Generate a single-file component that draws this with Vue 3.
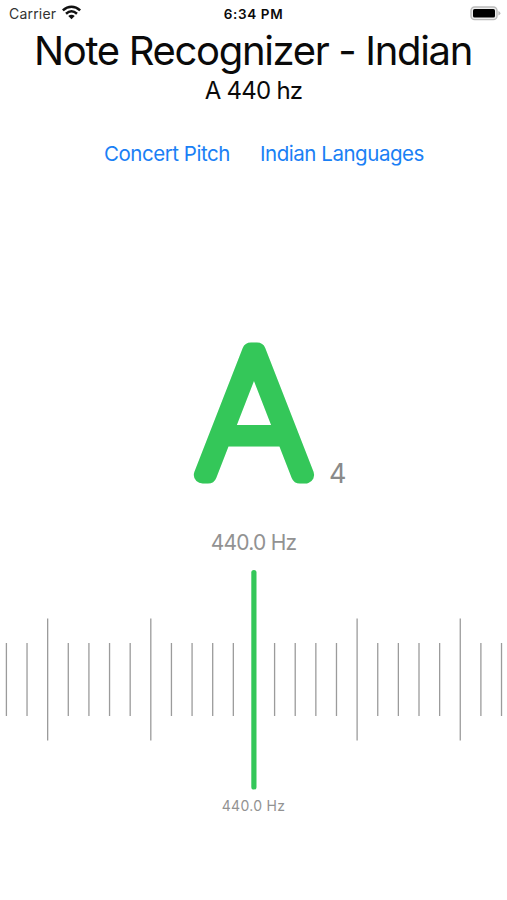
<template>
    <div class="screen">
        <header class="status-bar">
            <div class="carrier">
                <span>Carrier</span>
                <svg class="wifi" viewBox="0 0 18 14">
                    <path d="M.8 5 C5.8 .3 12.2 .3 17.2 5" />
                    <path d="M3.8 8.2 C7 5.3 11 5.3 14.2 8.2" />
                    <path class="dot" d="M5.9 10.3 Q9 7.9 12.1 10.3 L9 13.4 Z" />
                </svg>
            </div>
            <span class="clock">6:34 PM</span>
            <svg class="battery" viewBox="0 0 31 15">
                <rect class="shell" x="1" y="1" width="26" height="12.6" rx="3.6" />
                <rect class="charge" x="3" y="3" width="22" height="8.6" rx="1.6" />
                <path class="cap" d="M28.4 5 Q30.4 5.8 30.4 7.3 Q30.4 8.8 28.4 9.6 Z" />
            </svg>
        </header>

        <h1 class="title">Note Recognizer - Indian</h1>
        <p class="pitch">A 440 hz</p>

        <nav class="links">
            <a v-for="link in links" :key="link" class="link">{{ link }}</a>
        </nav>

        <main class="tuner">
            <div class="note">
                <svg class="note-name" viewBox="0 0 140 210">
                    <text transform="translate(70 164.3) scale(1.045 1)">{{ note }}</text>
                </svg>
                <span class="octave">{{ octave }}</span>
            </div>
            <p class="frequency">{{ frequency }}</p>
            <svg class="scale" viewBox="0 0 507 220">
                <line v-for="tick in ticks" :key="tick.x" class="tick"
                    :x1="tick.x" :x2="tick.x" :y1="tick.top" :y2="tick.bottom" />
                <rect class="needle" x="251.3" y="0" width="5.2" height="219.5" rx="2.6" />
            </svg>
            <p class="target">{{ frequency }}</p>
        </main>
    </div>
</template>

<script setup>
import { ref, computed } from 'vue';

const links = ['Concert Pitch', 'Indian Languages'];
const note = ref('A');
const octave = ref(4);
const hertz = ref(440);
const frequency = computed(() => `${hertz.value.toFixed(1)} Hz`);

// 25 marks, the middle one is covered by the needle
const ticks = computed(() => {
    const list = [];
    for (let i = 0; i < 25; i++) {
        if (i === 12) continue;
        const major = i % 5 === 2;
        list.push({
            x: 6.4 + i * 20.63,
            top: major ? 48.5 : 73,
            bottom: major ? 170.5 : 146
        });
    }
    return list;
});
</script>

<style>
body {
    background: #fff;
}
</style>

<style scoped>
.screen {
    width: 507px;
    height: 900px;
    overflow: hidden;
    background: #fff;
    color: #0a0a0a;
    font-family: Inter, "Liberation Sans", sans-serif;
}

.status-bar {
    display: grid;
    grid-template-columns: 1fr auto 1fr;
    align-items: center;
    height: 27px;
    padding: 0 6px 0 9px;
    box-sizing: border-box;
    font-size: 14px;
}

.carrier {
    display: flex;
    align-items: center;
    gap: 6px;
    color: #333;
    letter-spacing: .2px;
}

.wifi {
    width: 19px;
    height: 15px;
    margin-top: -2px;
    fill: none;
    stroke: #111;
    stroke-width: 2.4;
}

.wifi .dot {
    fill: #111;
    stroke: none;
}

.clock {
    margin-right: 3px;
    font-size: 13.5px;
    font-weight: 600;
    letter-spacing: .65px;
}

.battery {
    justify-self: end;
    width: 31px;
    height: 15px;
}

.shell {
    fill: #eee;
    stroke: #bbb;
    stroke-width: 1.4;
}

.charge {
    fill: #000;
}

.cap {
    fill: #bbb;
}

.title {
    margin: 0;
    height: 48px;
    line-height: 48px;
    font-size: 40px;
    font-weight: 400;
    letter-spacing: -1.33px;
    text-indent: -1px;
    text-align: center;
    white-space: nowrap;
}

.pitch {
    margin: 0;
    height: 30px;
    line-height: 31px;
    font-size: 24px;
    letter-spacing: -.75px;
    text-align: center;
}

.links {
    display: flex;
    gap: 30px;
    margin-top: 36px;
    padding-left: 104px;
    line-height: 26px;
    font-size: 20.5px;
    letter-spacing: -.46px;
    color: #1a80f5;
}

.link {
    white-space: nowrap;
}

.tuner {
    display: flex;
    flex-direction: column;
    margin-top: 144px;
}

.note {
    display: flex;
    align-items: flex-end;
    height: 210px;
    padding-left: 184px;
}

.note-name {
    width: 140px;
    height: 210px;
    fill: #34c759;
    stroke: #34c759;
    stroke-width: 17px;
    stroke-linejoin: round;
    font-family: Roboto, sans-serif;
    font-size: 174px;
    font-weight: 100;
    text-anchor: middle;
}

.octave {
    margin: 0 0 31px 5px;
    line-height: 32px;
    font-size: 27px;
    color: #8a8a8a;
}

.frequency {
    margin: 8px 0 0;
    line-height: 28px;
    font-size: 21px;
    letter-spacing: -.75px;
    text-align: center;
    color: #929292;
}

.scale {
    width: 507px;
    height: 220px;
    margin-top: 12.5px;
}

.tick {
    stroke: #9b9b9b;
    stroke-width: 1.3;
}

.needle {
    fill: #34c759;
}

.target {
    margin: 7px 0 0;
    line-height: 18px;
    font-size: 14px;
    letter-spacing: .3px;
    text-align: center;
    color: #929292;
}
</style>
